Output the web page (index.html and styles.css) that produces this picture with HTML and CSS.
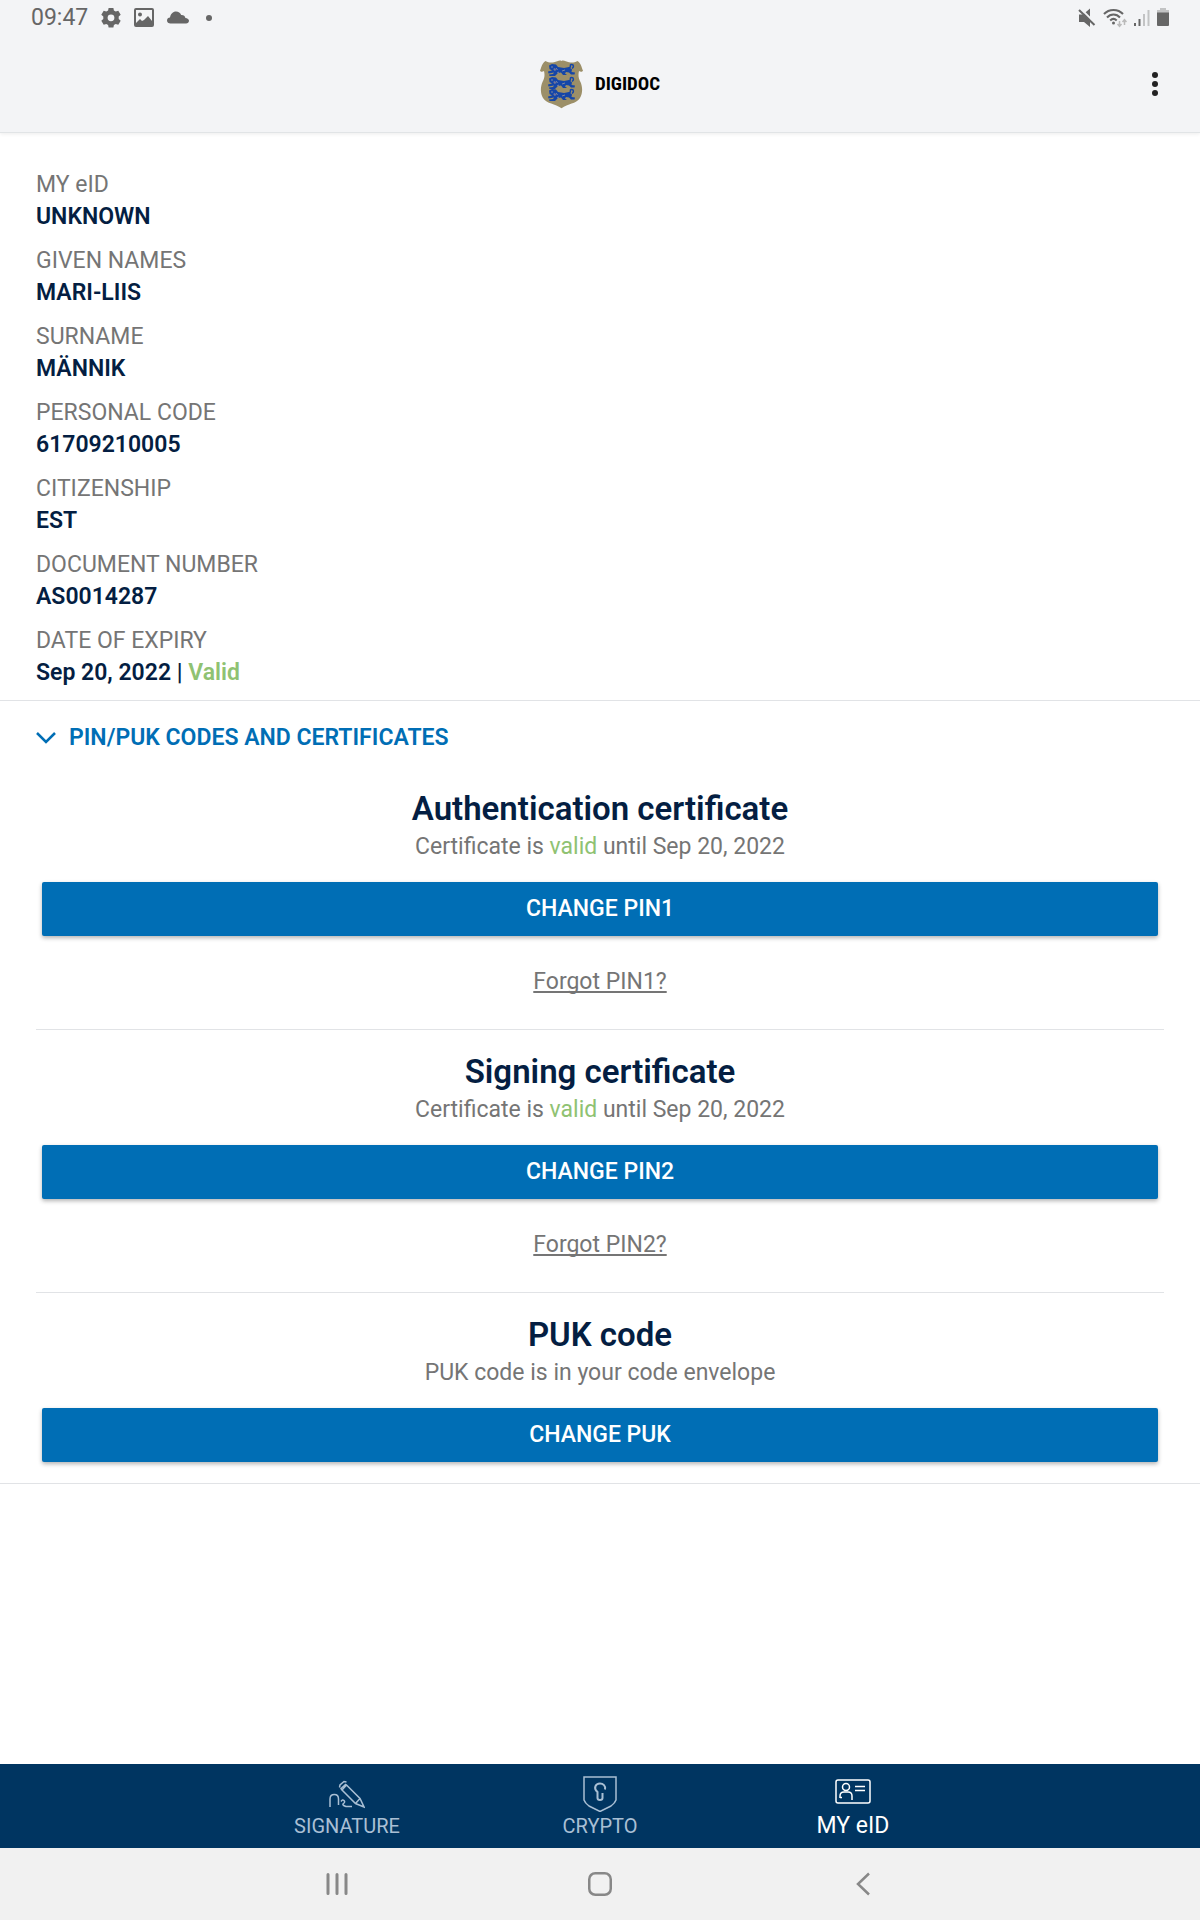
FILE: index.html
```html
<!DOCTYPE html>
<html lang="en">
<head>
    <meta charset="UTF-8">
    <meta name="viewport" content="width=device-width, initial-scale=1.0">
    <title>DigiDoc - My eID</title>
    <link rel="stylesheet" href="styles.css">
</head>
<body>
    <header class="top">
        <div class="status-bar">
            <div class="status-left">
                <span class="clock">09:47</span>
                <svg width="20" height="20" viewBox="0 0 20 20" fill="#666">
                    <path fill-rule="evenodd" d="M7.600 0h4.800l.5 2.600 1.800 1 2.600-.9 2.400 4.100-2 1.800v2.300l2 1.800-2.400 4.100-2.600-.9-1.800 1-.5 2.600H7.600l-.5-2.600-1.800-1-2.600.9-2.400-4.100 2-1.800V8.600l-2-1.800 2.400-4.100 2.600.9 1.800-1zM10 6.400a3.400 3.400 0 1 0 0 6.800 3.400 3.400 0 0 0 0-6.800z"/>
                </svg>
                <svg width="20" height="20" viewBox="0 0 20 20">
                    <rect x="1" y="1" width="18" height="17" rx="1" fill="none" stroke="#666" stroke-width="2"/>
                    <circle cx="6" cy="6.500" r="2" fill="#666"/>
                    <path d="M2 15l4-4 2 2 2-1 4-4 4 5v5H2z" fill="#666"/>
                </svg>
                <svg width="22" height="20" viewBox="0 0 22 20" fill="#666">
                    <path d="M3.500 15.500C1.500 15.500 0 14.300 0 12.500S1.400 9.600 3 9.500C3.600 6 6 3.500 9 3.500c2.500 0 4.300 1.300 5.200 3.400 2.300-.2 3.800 1 4.200 3 2.100.1 3.600 1.300 3.600 2.900s-1.300 2.700-3 2.700z"/>
                </svg>
                <span class="dot"></span>
            </div>
            <div class="status-right">
                <svg width="18" height="20" viewBox="0 0 18 20">
                    <path d="M1 6.500h4l7-6V19l-6-5H1z" fill="#666"/>
                    <path d="M2 0l16 16" stroke="#f3f4f6" stroke-width="2"/>
                    <path d="M1 2l15.500 15" stroke="#666" stroke-width="2"/>
                </svg>
                <svg width="24" height="20" viewBox="0 0 24 20" fill="none" stroke="#666" stroke-width="2">
                    <path d="M1 6c5-5.500 14-5.500 19 0M4 9.500c3.500-4 9.500-4 13 0M7.200 12.500c2-2 4.500-2 6.500 0"/>
                    <circle cx="10.500" cy="15" r="1.500" fill="#666" stroke="none"/>
                    <path d="M16.500 13v5m-2-2l2 2.300 2-2.300M21.500 17v-5m-2 2l2-2.300 2 2.300" stroke="#bbb" stroke-width="1.500"/>
                </svg>
                <svg width="16" height="20" viewBox="0 0 16 20">
                    <path d="M0 15h2v3H0zM4.500 11h2v7h-2z" fill="#666"/>
                    <path d="M9 6h2v12H9zM13.500 2h2v16h-2z" fill="#c2c3c4"/>
                </svg>
                <svg width="12" height="20" viewBox="0 0 12 20">
                    <path d="M3 0h6v2h3v3H0V2h3z" fill="#c2c3c4"/>
                    <path d="M0 4.500h12V17q0 1-1 1H1q-1 0-1-1z" fill="#666"/>
                </svg>
            </div>
        </div>
        <div class="toolbar">
            <div class="brand">
                <svg width="43" height="49" viewBox="0 0 43 49">
                    <defs>
                        <g id="lion">
                            <path d="M1 1.500L4 0l4 .5 2 2.500 6 1 5-1 3 2.500-.5 2.500 3.500.5-.5 2H23l-2-2-3-.5-1 1.500 2 1.500h-4l-2-2.500-3 .5-3 3H1.500L1 10.500l4-.5 1-1.500-5.500 1L0 7.500l4-1L1.500 5z" fill="#1546a8"/>
                            <path d="M21 4c3-1 0-3.500 2.500-3.500S26 3 24 4.500" fill="none" stroke="#1546a8" stroke-width="1.500"/>
                            <path d="M3 3h2M8 4l1.500 2M14 7l3-1M9 9l2-1" stroke="#7f86a0"/>
                            <path d="M6 4.500l1.500 2" stroke="#75749a" stroke-width="2"/>
                        </g>
                    </defs>
                    <path d="M0 10.500C1.500 8 1.500 3.500 5.500 1c3 1.500 5 1.800 8.500 1.300C17 1.800 19.500-.500 21.500 1c2-1.500 4.500.8 7.500 1.300 3.500.5 5.500.2 8.500-1.300 4 2.500 4 7 5.500 9.500-.5 1.500-2.500 1.700-4 .5-1 4.500-.5 7 1.500 11 2 4.500 2.500 11-.5 16-4 6-12 5.500-18.500 10.300C15 43.500 7 44 3 38c-3-5-2.500-11.500-.5-16 2-4 2.500-6.500 1.500-11-1.500 1.200-3.500 1-4-.500z" fill="#9c8f68"/>
                    <use href="#lion" x="8" y="4"/>
                    <use href="#lion" x="8" y="17"/>
                    <use href="#lion" x="8" y="29"/>
                </svg>
                <span class="brand-name">DIGIDOC</span>
            </div>
            <button class="menu-button" type="button" aria-label="More options">
                <svg width="6" height="24" viewBox="0 0 6 24" fill="#222">
                    <circle cx="3" cy="3" r="3"/>
                    <circle cx="3" cy="12" r="3"/>
                    <circle cx="3" cy="21" r="3"/>
                </svg>
            </button>
        </div>
    </header>

    <main>
        <dl class="details">
            <div><dt>MY eID</dt><dd>UNKNOWN</dd></div>
            <div><dt>GIVEN NAMES</dt><dd>MARI-LIIS</dd></div>
            <div><dt>SURNAME</dt><dd>MÄNNIK</dd></div>
            <div><dt>PERSONAL CODE</dt><dd>61709210005</dd></div>
            <div><dt>CITIZENSHIP</dt><dd>EST</dd></div>
            <div><dt>DOCUMENT NUMBER</dt><dd>AS0014287</dd></div>
            <div><dt>DATE OF EXPIRY</dt><dd>Sep 20, 2022 | <span class="valid">Valid</span></dd></div>
        </dl>

        <div class="codes">
            <button class="toggle" type="button" aria-expanded="true" aria-controls="certificates">
                <svg width="20" height="12" viewBox="0 0 20 12" fill="none" stroke="#006eb5" stroke-width="2.500">
                    <path d="M1 1l9 9 9-9"/>
                </svg>
                PIN/PUK CODES AND CERTIFICATES
            </button>
            <div id="certificates">
                <section class="certificate">
                    <h2>Authentication certificate</h2>
                    <p>Certificate is <span class="valid">valid</span> until Sep 20, 2022</p>
                    <button class="change" type="button">CHANGE PIN1</button>
                    <a class="forgot" href="#">Forgot PIN1?</a>
                </section>
                <section class="certificate">
                    <h2>Signing certificate</h2>
                    <p>Certificate is <span class="valid">valid</span> until Sep 20, 2022</p>
                    <button class="change" type="button">CHANGE PIN2</button>
                    <a class="forgot" href="#">Forgot PIN2?</a>
                </section>
                <section class="certificate">
                    <h2>PUK code</h2>
                    <p>PUK code is in your code envelope</p>
                    <button class="change" type="button">CHANGE PUK</button>
                </section>
            </div>
        </div>
    </main>

    <nav class="tabs">
        <a class="tab" href="#">
            <svg width="36" height="36" viewBox="0 0 36 36" fill="none" stroke="currentColor" stroke-width="1.500">
                <path d="M1 31V23q0-4.500 4.300-4.500T9.500 23v6M12 25.500q1.500-2.500 3-1t-.5 3 2.500 3H23"/>
                <path d="M17.500 9L31 22.500 35 31l-8.500-3.500L13 14zM31 22.500l-4.500 5M10.500 11.500l.5-2.500 4-3.500 2.500.5M13 14l-1-1.500 5-4.500"/>
            </svg>
            <span>SIGNATURE</span>
        </a>
        <a class="tab" href="#">
            <svg width="36" height="36" viewBox="0 0 36 36" fill="none" stroke="currentColor" stroke-width="1.500">
                <path d="M2 1h32v23q-1 3-5 6l-11 5.500L7 30q-4-3-5-6z"/>
                <path d="M23 13.500c1-3.500-2-6-5-6-4.500 0-7 5-2.500 8.500v6q0 2 2.500 2t2.500-2v-5" stroke-width="2"/>
            </svg>
            <span>CRYPTO</span>
        </a>
        <a class="tab active" href="#" aria-current="page">
            <svg width="36" height="36" viewBox="0 0 36 36" fill="none" stroke="currentColor" stroke-width="1.500">
                <rect x="1" y="4" width="34" height="23" rx="2"/>
                <circle cx="11" cy="11" r="3.500"/>
                <path d="M5 22v-2q0-4 4-4h4q4 0 4 4v4M5 21.500h2M20 10.500h10M20 14.500h10"/>
            </svg>
            <span>MY eID</span>
        </a>
    </nav>

    <div class="system-nav">
        <button type="button" aria-label="Recent apps">
            <svg width="24" height="24" viewBox="0 0 24 24" stroke="#888" stroke-width="3" stroke-linecap="round">
                <path d="M3 2.500v19M12 2.500v19M21 2.500v19"/>
            </svg>
        </button>
        <button type="button" aria-label="Home">
            <svg width="24" height="24" viewBox="0 0 24 24" fill="none" stroke="#888" stroke-width="2.500">
                <rect x="1.250" y="1.250" width="21.500" height="21.500" rx="6"/>
            </svg>
        </button>
        <button type="button" aria-label="Back">
            <svg width="24" height="24" viewBox="0 0 24 24" fill="none" stroke="#888" stroke-width="2.500">
                <path d="M18 1.500L7 12l11 10.500"/>
            </svg>
        </button>
    </div>
</body>
</html>
```

FILE: styles.css
```css
body {
    font-family: Roboto, Arial, sans-serif;
    font-size: 23px;
    line-height: 32px;
    margin: 0;
    min-height: 100vh;
    display: flex;
    flex-direction: column;
    background-color: #fff;
    color: #757575;
}

button {
    font: inherit;
    border: none;
    background: none;
    padding: 0;
    cursor: pointer;
}

svg {
    display: block;
    flex: none;
}

.top {
    background-color: #f3f4f6;
    border-bottom: 1px solid #e1e4e6;
    box-shadow: 0 1px 4px rgba(0, 0, 0, 0.08);
}

.status-bar {
    display: flex;
    justify-content: space-between;
    align-items: center;
    height: 36px;
    padding: 0 31px;
}

.status-left,
.status-right {
    display: flex;
    align-items: center;
    gap: 13px;
}

.status-right {
    gap: 7px;
}

.clock {
    color: #666;
}

.dot {
    width: 6px;
    height: 6px;
    margin-left: 4px;
    border-radius: 50%;
    background-color: #666;
}

.toolbar {
    display: grid;
    grid-template-columns: 1fr auto 1fr;
    align-items: center;
    height: 96px;
    padding: 0 30px;
}

.brand {
    grid-column: 2;
    display: flex;
    align-items: center;
    gap: 12px;
}

.brand-name {
    font-family: "Roboto Condensed", "Liberation Sans Narrow", Roboto, sans-serif;
    font-size: 19px;
    font-weight: bold;
    color: #000;
}

.menu-button {
    justify-self: end;
    padding: 12px;
}

main {
    flex: 1;
}

.details {
    display: flex;
    flex-direction: column;
    gap: 12px;
    margin: 0;
    padding: 36px 36px 11px;
    border-bottom: 1px solid #e1e3e6;
}

.details dd {
    margin: 0;
    font-weight: 600;
    color: #041e42;
}

.details .valid,
.valid {
    color: #8fc272;
}

.codes {
    padding: 21px 36px 0;
    border-bottom: 1px solid #e1e3e6;
}

.toggle {
    display: flex;
    align-items: center;
    gap: 13px;
    margin-bottom: 13px;
    font-weight: 600;
    color: #006eb5;
}

.certificate {
    display: flex;
    flex-direction: column;
    align-items: center;
    padding: 20px 0 31px;
    border-bottom: 1px solid #e1e3e6;
}

.certificate:last-child {
    padding-bottom: 21px;
    border-bottom: none;
}

.certificate h2 {
    margin: 0;
    font-size: 33px;
    font-weight: 600;
    line-height: 44px;
    color: #041e42;
}

.certificate p {
    margin: 0 0 19px;
}

.change {
    align-self: stretch;
    height: 54px;
    margin: 0 6px;
    border-radius: 2px;
    background-color: #006eb5;
    color: #fff;
    font-weight: 500;
    box-shadow: 0 2px 4px rgba(0, 0, 0, 0.3);
}

.forgot {
    margin-top: 30px;
    color: inherit;
    text-decoration: underline;
    text-decoration-skip-ink: none;
}

.tabs {
    display: flex;
    justify-content: center;
    background-color: #003561;
}

.tab {
    display: flex;
    flex-direction: column;
    align-items: center;
    width: 253px;
    padding: 12px 0 8px;
    box-sizing: border-box;
    color: #a9bfd4;
    font-size: 20px;
    line-height: 28px;
    text-decoration: none;
}

.tab.active {
    color: #fff;
    font-size: 23px;
}

.system-nav {
    display: flex;
    justify-content: center;
    background-color: #f1f1f1;
}

.system-nav button {
    display: flex;
    justify-content: center;
    width: 263px;
    padding: 24px 0;
}
```
